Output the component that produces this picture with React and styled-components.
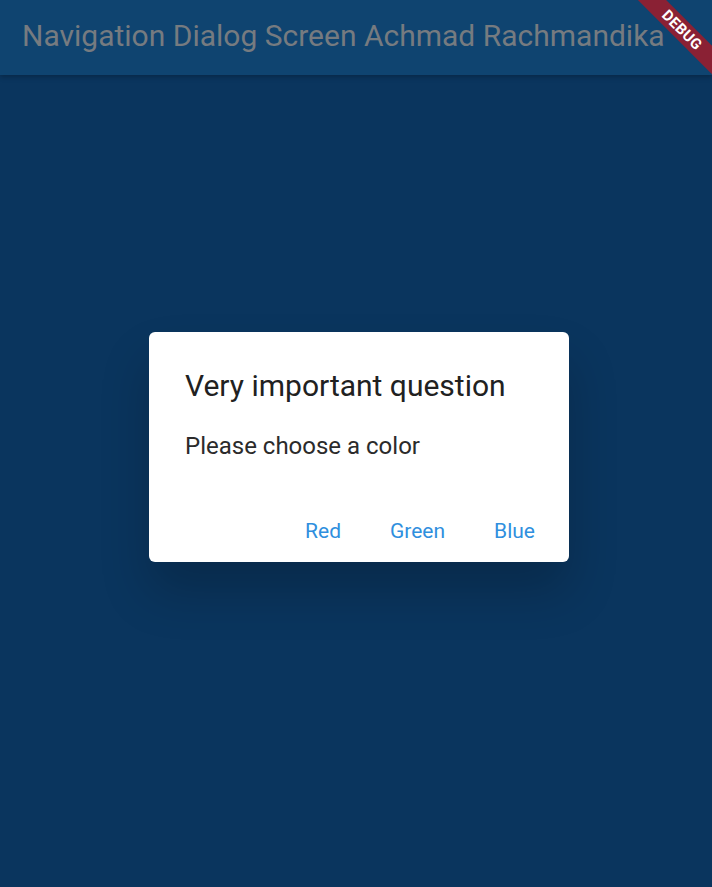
import React from 'react';
import styled, { createGlobalStyle } from 'styled-components';

const GlobalStyle = createGlobalStyle`
  html, body { margin: 0; padding: 0; }
  body { font-family: Roboto, "Liberation Sans", sans-serif; background: #0a355e; }
`;

const Screen = styled.div`
  position: relative;
  width: 712px;
  height: 887px;
  overflow: hidden;
  background: #0a355e;
  display: flex;
  flex-direction: column;
`;

const AppBar = styled.header`
  height: 75px;
  flex-shrink: 0;
  background: #0f4470;
  display: flex;
  align-items: center;
  padding-left: 22px;
  box-shadow: 0 2px 5px rgba(0, 0, 0, 0.25);
  position: relative;
  z-index: 1;
`;

const Title = styled.h1`
  margin: 0;
  font-size: 30px;
  font-weight: 400;
  color: #767b80;
  margin-top: -5px;
  white-space: nowrap;
`;

const Body = styled.main`
  flex: 1;
  display: flex;
  justify-content: center;
  padding-top: 257px;
  padding-left: 6px;
`;

const Dialog = styled.div`
  width: 420px;
  height: 230px;
  box-sizing: border-box;
  background: #ffffff;
  border-radius: 6px;
  box-shadow: 0 30px 50px rgba(0, 0, 0, 0.2);
  display: flex;
  flex-direction: column;
  padding: 34px 34px 0 36px;
`;

const DialogTitle = styled.h2`
  margin: 0;
  font-size: 30px;
  font-weight: 400;
  color: #212121;
  line-height: 40px;
`;

const DialogText = styled.p`
  margin: 25px 0 0;
  font-size: 24px;
  color: #2b2b2b;
  line-height: 30px;
`;

const Actions = styled.div`
  margin-top: auto;
  margin-bottom: 17px;
  display: flex;
  justify-content: flex-end;
  gap: 49px;
`;

const ActionButton = styled.button`
  border: none;
  background: none;
  padding: 0;
  font-family: inherit;
  font-size: 21px;
  color: #2f8fde;
  line-height: 28px;
  cursor: pointer;
`;

const Ribbon = styled.div`
  position: absolute;
  top: 20px;
  right: -35px;
  width: 130px;
  height: 20px;
  background: #8a2134;
  transform: rotate(45deg);
  display: flex;
  align-items: center;
  justify-content: center;
  color: #fff;
  font-size: 15px;
  font-weight: 700;
  letter-spacing: 0.3px;
  z-index: 2;
`;

export default function App() {
  return (
    <>
      <GlobalStyle />
      <Screen>
        <AppBar>
          <Title>Navigation Dialog Screen Achmad Rachmandika</Title>
        </AppBar>
        <Body>
          <Dialog>
            <DialogTitle>Very important question</DialogTitle>
            <DialogText>Please choose a color</DialogText>
            <Actions>
              <ActionButton>Red</ActionButton>
              <ActionButton>Green</ActionButton>
              <ActionButton>Blue</ActionButton>
            </Actions>
          </Dialog>
        </Body>
        <Ribbon>DEBUG</Ribbon>
      </Screen>
    </>
  );
}
